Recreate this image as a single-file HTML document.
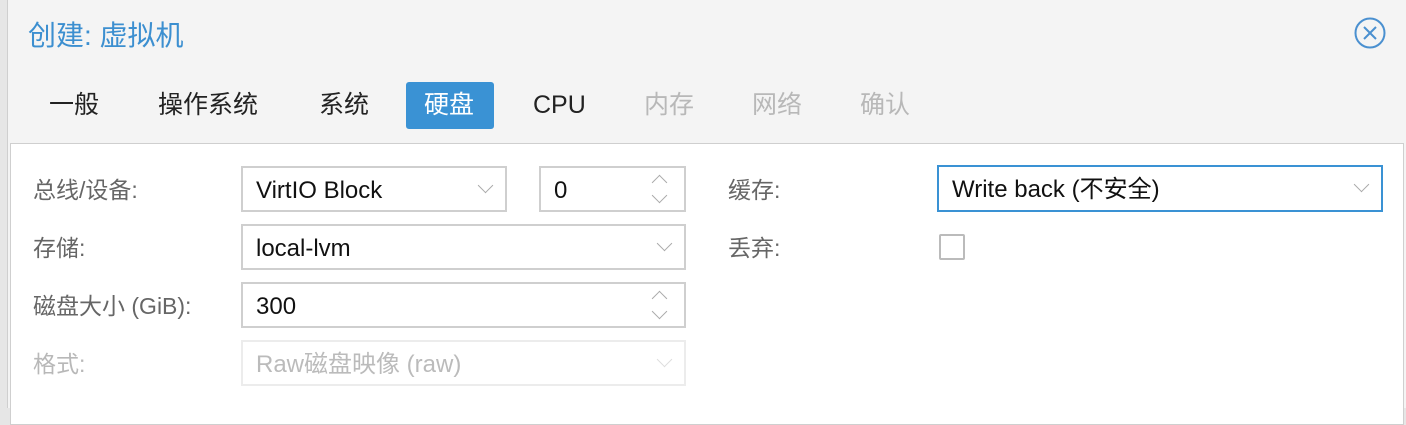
<!DOCTYPE html>
<html><head><meta charset="utf-8"><style>
body{margin:0;width:1406px;height:408px;overflow:hidden;background:#e6e6e6;font-family:"Liberation Sans","Noto Sans CJK SC",sans-serif;position:relative}
.dlg{position:absolute;left:7px;top:0;width:1399px;height:408px;background:#f4f4f4;border-left:1px solid #cfcfcf}
.t{position:absolute;white-space:nowrap;line-height:30px;height:30px}
.title{left:20px;top:21px;font-size:28px;color:#3c8fd0}
.tab{top:90px;font-size:25px;color:#222}
.act{position:absolute;left:398px;top:82px;width:88px;height:47px;background:#3a92d4;border-radius:3px}
.panel{position:absolute;left:2px;top:143px;width:1392px;height:280px;background:#fff;border:1px solid #cfcfcf}
.lbl{font-size:23px;color:#666}
.dis{color:#b8b8b8}
.box{position:absolute;border:2px solid #cfcfcf;background:#fff;box-sizing:border-box;font-size:24px;color:#111}
.box span{position:absolute;left:13px;top:8px;white-space:nowrap;line-height:30px}
.ch{position:absolute;right:14px;top:12px;width:10px;height:10px;border-right:1.5px solid #aaa;border-bottom:1.5px solid #aaa;transform:rotate(45deg)}
.sp{position:absolute;right:19px;width:10px;height:10px;border-right:1.5px solid #aaa;border-bottom:1.5px solid #aaa}
</style></head><body>
<div class="dlg">
<div class="t title">创建: 虚拟机</div>
<svg style="position:absolute;left:1346px;top:17px" width="32" height="32"><circle cx="16" cy="16" r="14.5" fill="none" stroke="#4a90d0" stroke-width="2"/><path d="M10 10L22 22M22 10L10 22" stroke="#4a90d0" stroke-width="2"/></svg>
<div class="act"></div>
<div class="t tab" style="left:41px">一般</div>
<div class="t tab" style="left:150px">操作系统</div>
<div class="t tab" style="left:311px">系统</div>
<div class="t tab" style="left:416px;color:#fff">硬盘</div>
<div class="t tab" style="left:525px">CPU</div>
<div class="t tab dis" style="left:636px">内存</div>
<div class="t tab dis" style="left:744px">网络</div>
<div class="t tab dis" style="left:852px">确认</div>
<div class="panel">
<div class="t lbl" style="left:22px;top:31px">总线/设备:</div>
<div class="box" style="left:230px;top:22px;width:266px;height:46px"><span>VirtIO Block</span><div class="ch"></div></div>
<div class="box" style="left:528px;top:22px;width:147px;height:46px"><span>0</span><div class="sp" style="top:9px;transform:rotate(-135deg)"></div><div class="sp" style="top:22px;transform:rotate(45deg)"></div></div>
<div class="t lbl" style="left:22px;top:89px">存储:</div>
<div class="box" style="left:230px;top:80px;width:445px;height:46px"><span>local-lvm</span><div class="ch"></div></div>
<div class="t lbl" style="left:22px;top:147px">磁盘大小 (GiB):</div>
<div class="box" style="left:230px;top:138px;width:445px;height:46px"><span>300</span><div class="sp" style="top:9px;transform:rotate(-135deg)"></div><div class="sp" style="top:22px;transform:rotate(45deg)"></div></div>
<div class="t lbl dis" style="left:22px;top:205px">格式:</div>
<div class="box" style="left:230px;top:196px;width:445px;height:46px;border-color:#ececec;color:#bbb"><span>Raw磁盘映像 (raw)</span><div class="ch" style="border-color:#ddd"></div></div>
<div class="t lbl" style="left:717px;top:31px">缓存:</div>
<div class="box" style="left:926px;top:21px;width:446px;height:47px;border-color:#3a92d4"><span>Write back (不安全)</span><div class="ch"></div></div>
<div class="t lbl" style="left:717px;top:89px">丢弃:</div>
<div class="box" style="left:928px;top:90px;width:26px;height:26px;border-color:#bbb;border-radius:2px"></div>
</div>
</div>
</body></html>
